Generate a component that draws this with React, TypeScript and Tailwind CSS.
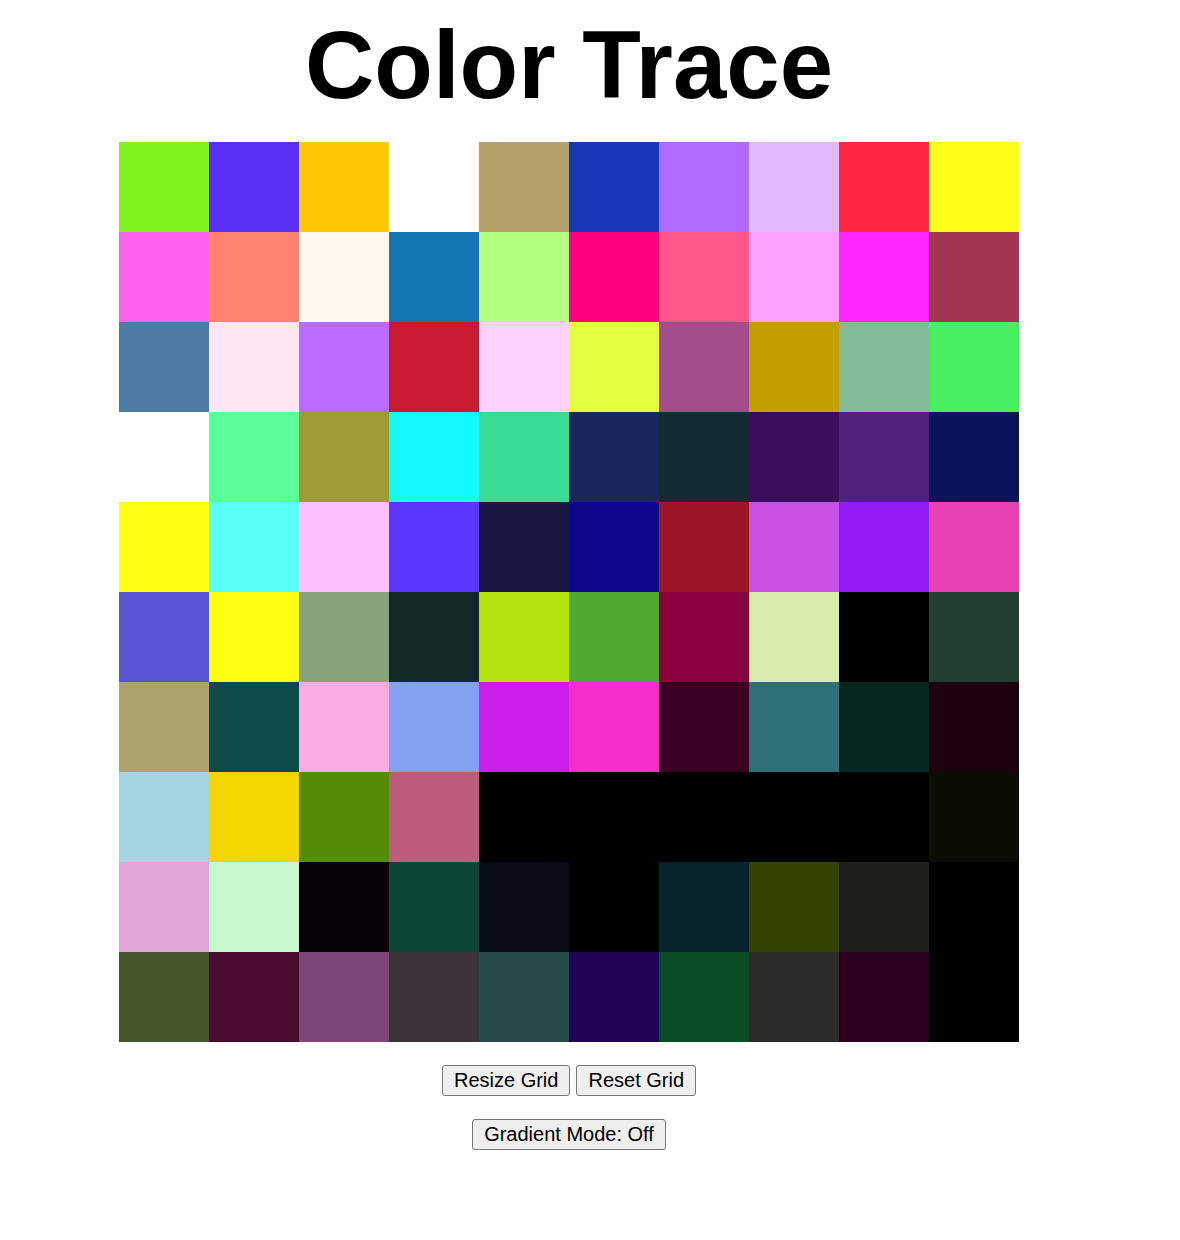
import React from "react";

const rows: string[][] = [
  ["bg-[#80f41a]", "bg-[#582ef2]", "bg-[#ffc800]", "bg-[#ffffff]", "bg-[#b39f69]", "bg-[#1737b8]", "bg-[#b06aff]", "bg-[#e2b8ff]", "bg-[#ff263f]", "bg-[#ffff1a]"],
  ["bg-[#ff63ee]", "bg-[#ff816f]", "bg-[#fff8ec]", "bg-[#1277b3]", "bg-[#b3ff80]", "bg-[#ff0080]", "bg-[#ff5888]", "bg-[#ffa2ff]", "bg-[#ff26ff]", "bg-[#a23552]"],
  ["bg-[#4e7ba2]", "bg-[#ffe6f5]", "bg-[#b96bff]", "bg-[#c91a32]", "bg-[#ffd1ff]", "bg-[#e3ff3d]", "bg-[#a34d8a]", "bg-[#c3a000]", "bg-[#83bb96]", "bg-[#48f060]"],
  ["bg-[#ffffff]", "bg-[#5aff98]", "bg-[#9e9a34]", "bg-[#14f8ff]", "bg-[#36dc94]", "bg-[#1b265d]", "bg-[#142b31]", "bg-[#3c0f5c]", "bg-[#54207f]", "bg-[#0b145a]"],
  ["bg-[#ffff14]", "bg-[#5afff5]", "bg-[#ffc0ff]", "bg-[#5b34ff]", "bg-[#181742]", "bg-[#0f078a]", "bg-[#9d172a]", "bg-[#c951e6]", "bg-[#931bf5]", "bg-[#ea40b6]"],
  ["bg-[#5754d4]", "bg-[#ffff14]", "bg-[#87a27a]", "bg-[#112826]", "bg-[#b4e20e]", "bg-[#4fa82f]", "bg-[#88003e]", "bg-[#d8ecab]", "bg-[#000000]", "bg-[#233f2f]"],
  ["bg-[#aca370]", "bg-[#0e4a4a]", "bg-[#f8ace3]", "bg-[#81a2f0]", "bg-[#cd1feb]", "bg-[#f52ec8]", "bg-[#3a0222]", "bg-[#2e6f78]", "bg-[#042820]", "bg-[#1d000e]"],
  ["bg-[#a4d4e0]", "bg-[#f2d800]", "bg-[#558e04]", "bg-[#bf5c7b]", "bg-[#000000]", "bg-[#000000]", "bg-[#000000]", "bg-[#000000]", "bg-[#000000]", "bg-[#0b0c04]"],
  ["bg-[#e0a6d8]", "bg-[#c6f8cd]", "bg-[#08030b]", "bg-[#0c4535]", "bg-[#090c16]", "bg-[#000000]", "bg-[#07232b]", "bg-[#324400]", "bg-[#1e2019]", "bg-[#000000]"],
  ["bg-[#48572b]", "bg-[#4a0d30]", "bg-[#7e4678]", "bg-[#3d3237]", "bg-[#274b4b]", "bg-[#1e0253]", "bg-[#0a4c24]", "bg-[#292b29]", "bg-[#2e001e]", "bg-[#000000]"],
];

const btn =
  "bg-[#efefef] border border-[#767676] rounded-[3px] px-[11px] py-[3px] text-[20px] leading-[23px] text-black";

export default function App() {
  return (
    <div
      className="w-[1138px] min-h-[1240px] bg-white flex flex-col items-center"
      style={{ fontFamily: '"Liberation Sans", Arial, sans-serif' }}
    >
      <h1 className="mt-[10px] text-[96px] font-bold leading-[110px] text-black">Color Trace</h1>
      <div className="mt-[22px] grid grid-cols-[repeat(10,90px)] grid-rows-[repeat(10,90px)]">
        {rows.flat().map((c, i) => (
          <div key={i} className={`${c} w-[90px] h-[90px]`} />
        ))}
      </div>
      <div className="mt-[23px] flex gap-[6px]">
        <button className={btn}>Resize Grid</button>
        <button className={btn}>Reset Grid</button>
      </div>
      <div className="mt-[23px] flex">
        <button className={btn}>Gradient Mode: Off</button>
      </div>
    </div>
  );
}
